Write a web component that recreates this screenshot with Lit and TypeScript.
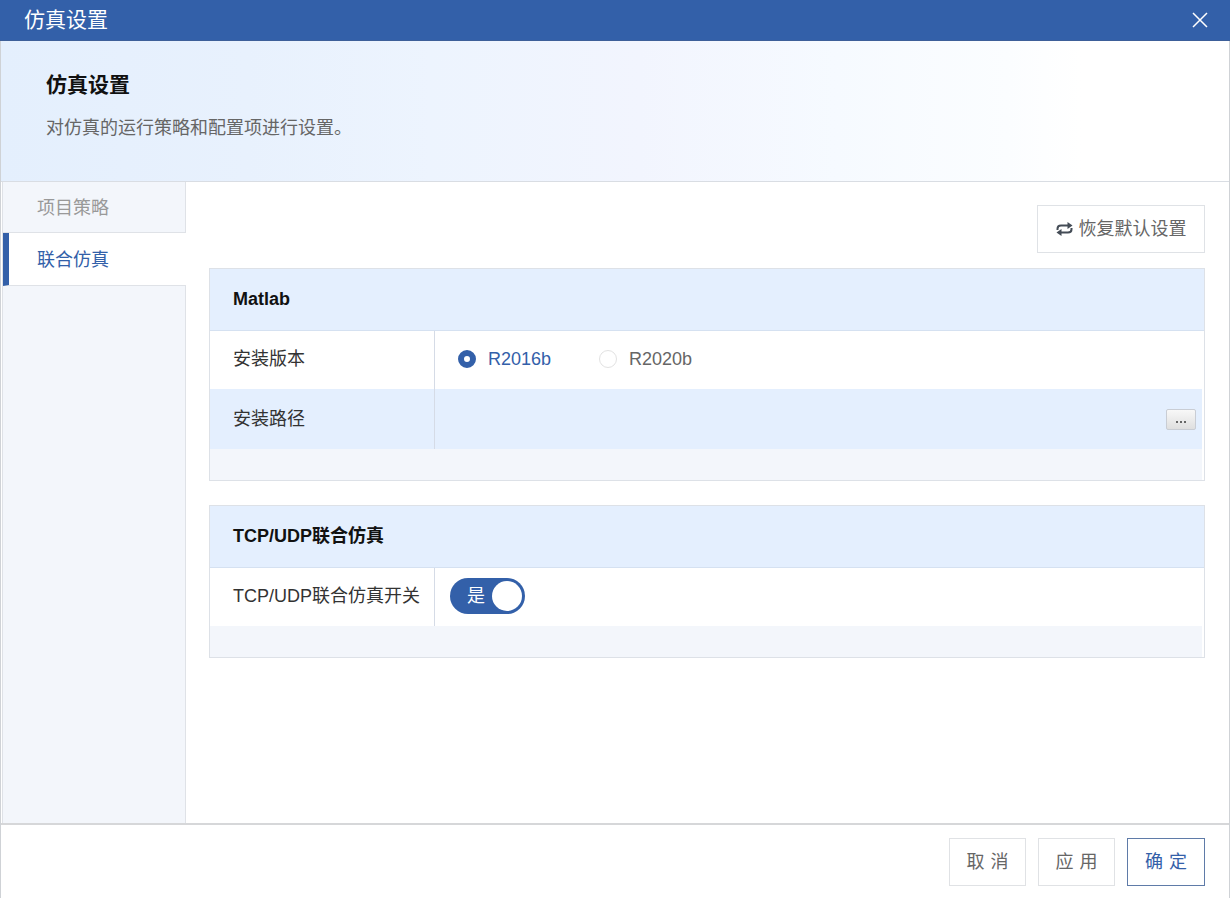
import { LitElement, html, css } from "lit";
import { customElement } from "lit/decorators.js";

@customElement("app-root")
export class AppRoot extends LitElement {
  static styles = css`
    :host {
      display: block;
      width: 1230px;
      height: 898px;
      font-family: "Liberation Sans", "Noto Sans CJK SC", sans-serif;
      font-size: 18px;
      line-height: 24px;
      color: #333;
      background: #fff;
    }
    * { box-sizing: border-box; }
    .win { width: 1230px; height: 898px; display: flex; flex-direction: column; }
    .titlebar {
      height: 41px; flex: none; background: #3360a9; border-bottom: 1px solid #3d5f99;
      color: #fff; font-size: 21px; display: flex; align-items: center;
      justify-content: space-between; padding: 0 22px 0 24px;
    }
    .titlebar svg { display: block; }
    .frame {
      flex: 1; min-height: 0; display: flex; flex-direction: column;
      border-left: 1px solid #cfd2d6; border-right: 1px solid #cfd2d6;
    }
    .banner {
      height: 141px; flex: none; padding: 29px 0 0 45px;
      border-bottom: 1px solid #d9dde3;
      background: linear-gradient(90deg, #e4effd 0%, #e8f1fd 20%, #edf4fe 35%, #f2f5fe 52%, #f6faff 68%, #fbfdff 82%, #fff 88%);
    }
    .banner h1 { margin: 0; font-size: 21px; line-height: 30px; font-weight: 700; color: #111; }
    .banner p { margin: 15px 0 0; font-size: 18px; line-height: 26px; color: #666; }
    .body { flex: 1; min-height: 0; display: flex; }
    .side {
      width: 184px; margin-left: 1px; flex: none; display: flex; flex-direction: column;
      background: #f3f6fb; border-left: 1px solid #dfe2e7; border-right: 1px solid #dfe2e7;
    }
    .tab { height: 51px; padding: 2px 0 0 34px; display: flex; align-items: center; color: #999; border-bottom: 1px solid #dfe2e7; }
    .tab.on {
      height: 53px; background: #fff; color: #3360a9; margin-right: -1px; padding-left: 28px;
      border-left: 6px solid #3360a9; border-bottom-color: #dfe2e7;
    }
    .main { flex: 1; min-width: 0; padding: 23px 24px 0 23px; display: flex; flex-direction: column; }
    .tools { display: flex; justify-content: flex-end; margin-bottom: 15px; }
    .restore {
      width: 168px; height: 48px; border: 1px solid #dfe2e6; background: #fff; color: #666;
      display: flex; align-items: center; justify-content: center; gap: 6px;
    }
    .section { border: 1px solid #dde1e7; margin-bottom: 24px; }
    .head {
      height: 62px; padding: 0 0 1px 23px; display: flex; align-items: center;
      background: #e4effe; border-bottom: 1px solid #d5e1f1; font-weight: 700; color: #111;
    }
    .row { display: grid; grid-template-columns: 225px 1fr; height: 58px; margin-right: 2px; }
    .row.tall { height: 60px; }
    .row.blue { background: #e4effe; }
    .label { padding: 0 0 2px 23px; display: flex; align-items: center; border-right: 1px solid #d5dbe6; white-space: nowrap; }
    .row.tall .label { padding-bottom: 0; }
    .value { display: flex; align-items: center; min-width: 0; padding-bottom: 2px; }
    .row.tall .value { padding-bottom: 0; }
    .foot { height: 31px; background: #f3f6fb; margin-right: 2px; }
    .radios { padding-left: 23px; gap: 0; }
    .radio { display: flex; align-items: center; gap: 12px; color: #666; }
    .radio.on { color: #3360a9; margin-right: 48px; }
    .dot { width: 18px; height: 18px; border-radius: 50%; border: 1px solid #e2e2e2; background: #fff; }
    .on .dot { border: 6px solid #3360a9; }
    .path { justify-content: flex-end; padding-right: 6px; }
    .more {
      width: 30px; height: 21px; border: 1px solid #c9cdd4; border-radius: 2px;
      background: linear-gradient(180deg, #f8f8f8, #dfdfdf);
      display: flex; align-items: center; justify-content: center; gap: 2px; padding-top: 6px;
    }
    .more i { width: 2px; height: 2px; background: #666; display: block; }
    .switch {
      width: 75px; height: 36px; margin-left: 15px; border-radius: 18px; background: #3360a9;
      display: flex; align-items: center; justify-content: space-between; padding: 0 3px 0 17px; color: #fff;
    }
    .knob { width: 30px; height: 30px; border-radius: 50%; background: #fff; }
    .footer {
      height: 75px; flex: none; border-top: 2px solid #d6d7d9; display: flex; justify-content: flex-end;
      align-items: flex-start; gap: 12px; padding: 13px 24px 0 0;
    }
    .btn {
      width: 77px; height: 48px; border: 1px solid #e0e2e5; background: #fff; color: #666;
      display: flex; align-items: center; justify-content: center; letter-spacing: 6px; text-indent: 6px;
    }
    .btn.primary { width: 78px; border-color: #5f7ba8; color: #3360a9; }
  `;

  render() {
    return html`
      <div class="win">
        <div class="titlebar">
          <span>仿真设置</span>
          <svg width="16" height="16" viewBox="0 0 16 16" fill="none" stroke="#fff" stroke-width="1.5">
            <path d="M1 1L15 15M15 1L1 15" />
          </svg>
        </div>
        <div class="frame">
          <div class="banner">
            <h1>仿真设置</h1>
            <p>对仿真的运行策略和配置项进行设置。</p>
          </div>
          <div class="body">
            <div class="side">
              <div class="tab">项目策略</div>
              <div class="tab on">联合仿真</div>
            </div>
            <div class="main">
              <div class="tools">
                <div class="restore">
                  <svg width="17" height="16" viewBox="0 0 17 16" fill="none">
                    <path d="M1.5 9V7.8C1.5 5.6 3 4.5 5 4.5H12" stroke="#444c56" stroke-width="2" />
                    <path d="M11.5 1L16.5 4.5L11.5 8Z" fill="#444c56" />
                    <path d="M15.5 7V8.2C15.5 10.4 14 11.5 12 11.5H5" stroke="#444c56" stroke-width="2" />
                    <path d="M5.5 8L.5 11.5L5.5 15Z" fill="#444c56" />
                  </svg>
                  <span>恢复默认设置</span>
                </div>
              </div>
              <div class="section">
                <div class="head">Matlab</div>
                <div class="row">
                  <div class="label">安装版本</div>
                  <div class="value radios">
                    <div class="radio on"><span class="dot"></span>R2016b</div>
                    <div class="radio"><span class="dot"></span>R2020b</div>
                  </div>
                </div>
                <div class="row tall blue">
                  <div class="label">安装路径</div>
                  <div class="value path"><div class="more"><i></i><i></i><i></i></div></div>
                </div>
                <div class="foot"></div>
              </div>
              <div class="section">
                <div class="head">TCP/UDP联合仿真</div>
                <div class="row">
                  <div class="label">TCP/UDP联合仿真开关</div>
                  <div class="value"><div class="switch"><span>是</span><span class="knob"></span></div></div>
                </div>
                <div class="foot"></div>
              </div>
            </div>
          </div>
          <div class="footer">
            <div class="btn">取消</div>
            <div class="btn">应用</div>
            <div class="btn primary">确定</div>
          </div>
        </div>
      </div>
    `;
  }
}
